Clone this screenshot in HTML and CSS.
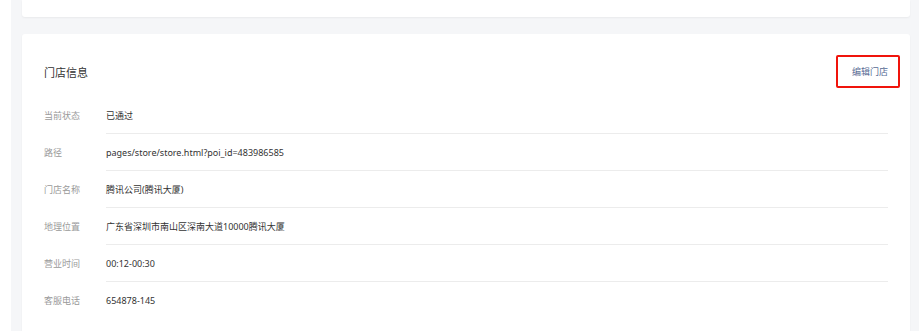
FILE: index.html
```html
<!DOCTYPE html>
<html lang="zh-CN">
<head>
    <meta charset="UTF-8">
    <meta name="viewport" content="width=device-width, initial-scale=1.0">
    <title>门店信息</title>
    <link rel="stylesheet" href="styles.css">
</head>
<body>
    <div class="main">
        <div class="card card-top"></div>

        <div class="card store-card">
            <div class="card-header">
                <h2>门店信息</h2>
                <a class="edit-btn" href="#">编辑门店</a>
            </div>

            <div class="info-row">
                <div class="info-label">当前状态</div>
                <div class="info-value">已通过</div>
            </div>
            <div class="info-row">
                <div class="info-label">路径</div>
                <div class="info-value">pages/store/store.html?poi_id=483986585</div>
            </div>
            <div class="info-row">
                <div class="info-label">门店名称</div>
                <div class="info-value">腾讯公司(腾讯大厦)</div>
            </div>
            <div class="info-row">
                <div class="info-label">地理位置</div>
                <div class="info-value">广东省深圳市南山区深南大道10000腾讯大厦</div>
            </div>
            <div class="info-row">
                <div class="info-label">营业时间</div>
                <div class="info-value">00:12-00:30</div>
            </div>
            <div class="info-row">
                <div class="info-label">客服电话</div>
                <div class="info-value">654878-145</div>
            </div>
        </div>
    </div>
</body>
</html>
```

FILE: styles.css
```css
body {
    margin: 0;
    background-color: #fff;
    font-family: "Noto Sans", "Noto Sans CJK SC", sans-serif;
    color: #333;
}
.main {
    margin-left: 11px;
    padding: 0 9px 0 11px;
    background-color: #f5f6f8;
    min-height: 331px;
}
.card {
    background-color: #fff;
    border-radius: 3px;
    box-shadow: 0 1px 2px rgba(0,0,0,0.05);
}
.card-top {
    height: 17px;
    border-radius: 0 0 3px 3px;
    margin-bottom: 17px;
}
.store-card {
    padding: 21px 22px 20px 22px;
}
.card-header {
    display: flex;
    align-items: center;
    justify-content: space-between;
    margin-bottom: 9px;
}
.card-header h2 {
    margin: 0;
    font-size: 11px;
    font-weight: normal;
    color: #333;
}
.edit-btn {
    display: flex;
    align-items: center;
    height: 29px;
    padding: 0 10px 0 14px;
    margin-right: -12px;
    border: 2px solid #f0140c;
    border-radius: 2px;
    font-size: 9px;
    color: #576b95;
    text-decoration: none;
}
.info-row {
    display: flex;
    height: 37px;
}
.info-label {
    width: 62px;
    display: flex;
    align-items: center;
    font-size: 9px;
    color: #9a9a9a;
}
.info-value {
    flex: 1;
    display: flex;
    align-items: center;
    font-size: 9px;
    color: #333;
    border-bottom: 1px solid #ececec;
}
.info-row:last-child .info-value {
    border-bottom: none;
}
```
